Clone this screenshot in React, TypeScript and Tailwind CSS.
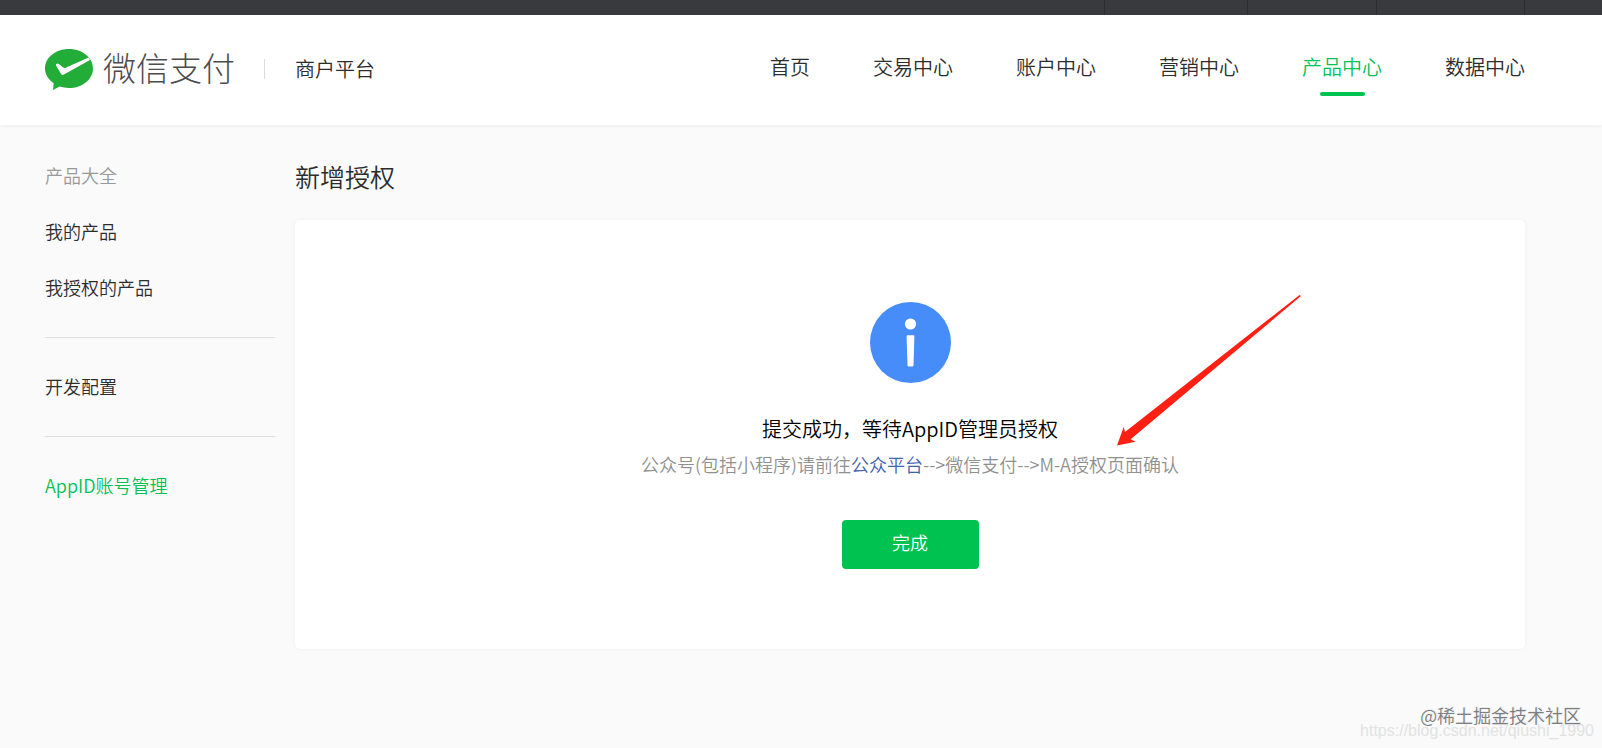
import clsx from "clsx";

const NAV = ["首页", "交易中心", "账户中心", "营销中心", "产品中心", "数据中心"];
const ACTIVE_NAV = "产品中心";

type SideItem = { label: string; tone?: "muted" | "active" };

const SIDE_GROUPS: SideItem[][] = [
  [{ label: "产品大全", tone: "muted" }, { label: "我的产品" }, { label: "我授权的产品" }],
  [{ label: "开发配置" }],
  [{ label: "AppID账号管理", tone: "active" }],
];

function TopBar() {
  return (
    <div className="flex h-[15px] justify-end bg-[#393a3e] pr-[77px]">
      <span className="w-[143px] border-l border-[#2b2c2f]" />
      <span className="w-[129px] border-l border-[#2b2c2f]" />
      <span className="w-[149px] border-x border-[#2b2c2f]" />
    </div>
  );
}

function PayLogo() {
  return (
    <svg viewBox="0 0 48 41" className="h-[41px] w-[48px]" aria-hidden="true">
      <path
        fill="#22ac38"
        d="M24 0C10.700 0 0 8.600 0 19.400c0 5.900 3.400 11.200 8.700 14.800L8 41l6.600-3.400c2.900.9 6 1.400 9.400 1.400 13.300 0 24-8.800 24-19.600S37.300 0 24 0z"
      />
      <path
        fill="#fff"
        d="M11.200 15.300c.7-1 1.700-.9 2.600-.2l4.400 3.400c.8.600 1.600.6 2.500.2L43.500 8.600l1.500 2.400-26.100 14.600c-1.200.7-2.300.3-2.900-.9l-4.900-8c-.3-.5-.2-.9.100-1.400z"
      />
    </svg>
  );
}

function Header() {
  return (
    <header className="flex h-[110px] items-start bg-white pr-[77px] pl-[45px] shadow-[0_1px_4px_rgba(0,0,0,0.06)]">
      <div className="flex h-[108px] items-center">
        <PayLogo />
        <span className="ml-[10px] pb-[4px] text-[33px] leading-[40px] font-light text-[#4c4c4c]">微信支付</span>
        <span className="ml-[29px] h-5 w-px bg-[#dcdcdc]" />
        <span className="ml-[30px] text-[20px] leading-[30px]">商户平台</span>
      </div>
      <nav className="ml-auto flex gap-[63px] pt-[37px]">
        {NAV.map((label) => (
          <a
            key={label}
            href="#"
            className={clsx("flex flex-col items-center text-[20px] leading-[30px]", label === ACTIVE_NAV && "text-[#06c152]")}
          >
            {label}
            {label === ACTIVE_NAV && <span className="mt-[10px] h-1 w-[45px] rounded-[2px] bg-[#00c250]" />}
          </a>
        ))}
      </nav>
    </header>
  );
}

function Sidebar() {
  return (
    <aside className="w-[230px] shrink-0 divide-y divide-[#dedede]">
      {SIDE_GROUPS.map((group, i) => (
        <ul key={i} className={clsx("space-y-[28px] pb-[36px]", i > 0 && "pt-[34px]")}>
          {group.map((item) => (
            <li key={item.label} className="text-[18px] leading-[28px]">
              <a
                href="#"
                className={clsx(item.tone === "muted" && "text-[#999]", item.tone === "active" && "text-[#06c152]")}
              >
                {item.label}
              </a>
            </li>
          ))}
        </ul>
      ))}
    </aside>
  );
}

function InfoIcon() {
  return (
    <svg viewBox="0 0 81 81" className="h-[81px] w-[81px]" aria-hidden="true">
      <circle cx="40.500" cy="40.500" r="40.500" fill="#468df9" />
      <circle cx="40.500" cy="22" r="5.600" fill="#fff" />
      <path fill="#fff" d="M38 33.200h5c1 0 1.400.5 1.400 1.400l-.9 28.400c0 1-.4 1.400-1.200 1.400h-3.600c-.8 0-1.200-.4-1.200-1.400l-.9-28.400c0-.9.400-1.400 1.400-1.400z" />
    </svg>
  );
}

function RedArrow() {
  return (
    <svg
      viewBox="0 0 184 151"
      className="absolute top-[75px] left-1/2 ml-[207px] h-[151px] w-[184px]"
      aria-hidden="true"
    >
      <path fill="#ff2013" d="M182.500 0 8 137 6.700 132 0 150.500 18.500 146.700 13.700 144.300 184 1z" />
    </svg>
  );
}

function ResultCard() {
  return (
    <section className="relative flex flex-col items-center rounded-[5px] bg-white pt-[82px] pb-[80px] shadow-[0_0_4px_rgba(0,0,0,0.05)]">
      <InfoIcon />
      <h2 className="mt-[31px] text-[20px] leading-[30px] text-black">提交成功，等待AppID管理员授权</h2>
      <p className="mt-[6px] text-[18px] leading-[28px] text-[#909090]">
        公众号(包括小程序)请前往
        <a href="#" className="text-[#3f61ae]">公众平台</a>
        --&gt;微信支付--&gt;M-A授权页面确认
      </p>
      <button
        type="button"
        className="mt-[42px] h-[49px] w-[137px] rounded-[4px] bg-[#00c250] pb-[4px] text-[18px] text-white"
      >
        完成
      </button>
      <RedArrow />
    </section>
  );
}

export default function App() {
  return (
    <div className="relative min-h-screen bg-[#fafafa] font-['Noto_Sans_CJK_SC',sans-serif] font-[350] text-[#2c2c2c]">
      <TopBar />
      <Header />
      <div className="flex gap-5 pt-[36px] pr-[77px] pl-[45px]">
        <Sidebar />
        <main className="min-w-0 flex-1">
          <h1 className="mb-[29px] text-[25px] leading-[30px]">新增授权</h1>
          <ResultCard />
        </main>
      </div>
      <div className="absolute right-[8px] bottom-[8px] flex flex-col items-end">
        <span className="mr-[13px] text-[18px] leading-[20px] text-[#7d7d7d] [text-shadow:1px_-1px_0_#ececec]">
          @稀土掘金技术社区
        </span>
        <span className="-mt-[3px] font-['Liberation_Sans',sans-serif] text-[16px] leading-[18px] text-[#e2e2e2]">
          https://blog.csdn.net/qiushi_1990
        </span>
      </div>
    </div>
  );
}
